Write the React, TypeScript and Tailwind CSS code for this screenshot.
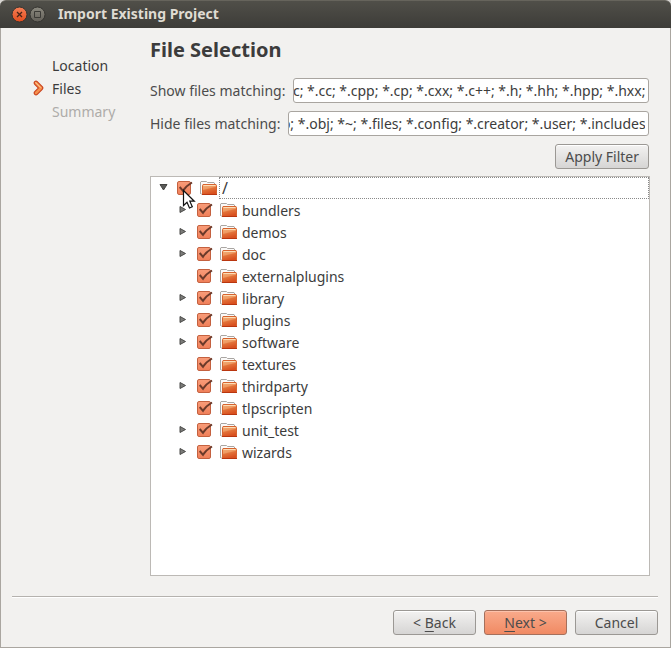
import { useId, useLayoutEffect, useRef, useState } from "react";
import type { ReactNode } from "react";

type Entry = { name: string; expandable: boolean };

const entries: Entry[] = [
  { name: "bundlers", expandable: true },
  { name: "demos", expandable: true },
  { name: "doc", expandable: true },
  { name: "externalplugins", expandable: false },
  { name: "library", expandable: true },
  { name: "plugins", expandable: true },
  { name: "software", expandable: true },
  { name: "textures", expandable: false },
  { name: "thirdparty", expandable: true },
  { name: "tlpscripten", expandable: false },
  { name: "unit_test", expandable: true },
  { name: "wizards", expandable: true },
];

function FolderIcon() {
  return (
    <svg width="17" height="16" viewBox="0 0 17 16" className="shrink-0" aria-hidden="true">
      <defs>
        <linearGradient id="folderFace" x1="0" y1="0" x2="0.35" y2="1">
          <stop offset="0" stopColor="#f3ae76" />
          <stop offset="0.45" stopColor="#ee9a62" />
          <stop offset="0.55" stopColor="#e2733a" />
          <stop offset="1" stopColor="#d9501f" />
        </linearGradient>
      </defs>
      <path d="M.5 14V2l.5-.5h5.500l1 1H14l.5.5v2" fill="#fbfaf9" stroke="#aaa6a3" />
      <path d="M.5 13.500 2.500 14.500" stroke="#b9b5b2" />
      <path d="M2.500 14.500V5.500l.5-1h13l.5 1v9z" fill="url(#folderFace)" stroke="#d7642f" />
      <path d="M3.500 5.500H15.500" stroke="#fbdcb6" />
      <path d="M2 14.500h15" stroke="#b9360f" />
    </svg>
  );
}

function TreeCheckbox({ id }: { id: string }) {
  return (
    <span className="relative size-4 shrink-0">
      <input
        id={id}
        type="checkbox"
        defaultChecked
        className="peer mt-px block size-[14px] appearance-none rounded-xs border border-[#c4613f] bg-white checked:bg-linear-to-b checked:from-[#f89b78] checked:to-[#f0805a]"
      />
      <svg
        viewBox="0 0 17 16"
        width="17"
        height="16"
        className="pointer-events-none absolute top-0 left-0 hidden peer-checked:block"
        aria-hidden="true"
      >
        <path d="M2.700 7 6 10.800Q9 6 15 2.500" fill="none" stroke="#6b3a2a" strokeWidth="2" />
      </svg>
    </span>
  );
}

function Expander({ open, label }: { open: boolean; label: string }) {
  return (
    <button type="button" aria-label={label} aria-expanded={open} className="flex size-4 shrink-0 items-center justify-center">
      <svg width="10" height="10" viewBox="0 0 10 10" aria-hidden="true">
        {open ? (
          <path d="M2 1.500h7L5.500 7z" fill="#5a5a58" stroke="#434341" />
        ) : (
          <path d="M2 1.500v6L7.500 4.500z" fill="#7b7b79" stroke="#4b4b49" />
        )}
      </svg>
    </button>
  );
}

function PointerCursor() {
  return (
    <svg width="14" height="21" viewBox="0 0 14 21" className="pointer-events-none absolute top-[12px] left-[31px] z-10" aria-hidden="true">
      <path d="M1.500 1.500v15l3.500-3.300 2.500 5.800 2.800-1.200-2.500-5.600h4.500z" fill="#fff" stroke="#111" strokeWidth="1.200" />
    </svg>
  );
}

function FilterField({ label, initial }: { label: string; initial: string }) {
  const id = useId();
  const ref = useRef<HTMLInputElement>(null);
  const [value, setValue] = useState(initial);
  // Keep the end of a long pattern list in view.
  useLayoutEffect(() => {
    if (ref.current) ref.current.scrollLeft = ref.current.scrollWidth;
  }, []);
  return (
    <div className="flex items-center gap-2">
      <label htmlFor={id} className="shrink-0 text-[#4c4c4c]">
        {label}
      </label>
      <input
        id={id}
        ref={ref}
        value={value}
        onChange={(e) => setValue(e.target.value)}
        className="h-[25px] min-w-0 flex-1 rounded-[3px] border border-[#a9a5a0] bg-white pr-[3px] text-right text-[#3c3c3c] outline-none"
      />
    </div>
  );
}

function PushButton({ children, primary = false, wide = true }: { children: ReactNode; primary?: boolean; wide?: boolean }) {
  const tone = primary
    ? "border-[#a5705c] from-[#f9aa8b] to-[#f08a63] shadow-[inset_0_1px_0_#fcc2ab]"
    : "border-[#9b9894] from-[#f3f2f1] to-[#d6d5d4] shadow-[inset_0_1px_0_#ffffff]";
  const width = wide ? "w-[83px]" : "px-[9px]";
  return (
    <button
      type="button"
      className={`flex h-[25px] items-center justify-center rounded-[3px] border bg-linear-to-b whitespace-pre text-[#4c4c4c] ${tone} ${width}`}
    >
      {children}
    </button>
  );
}

function TitleBar() {
  return (
    <header className="flex h-7 items-center rounded-t-md border-t border-[#66645c] bg-linear-to-b from-[#504f49] to-[#3d3c38] pl-[11px]">
      <button type="button" aria-label="Close" className="mr-px">
        <svg width="17" height="17" viewBox="0 0 17 17" aria-hidden="true">
          <defs>
            <linearGradient id="closeFace" x1="0" y1="0" x2="0" y2="1">
              <stop offset="0" stopColor="#f58057" />
              <stop offset="1" stopColor="#e44c1d" />
            </linearGradient>
          </defs>
          <circle cx="8.500" cy="8.500" r="7.500" fill="url(#closeFace)" stroke="#34332f" />
          <path d="m6 6 5 5m0-5-5 5" stroke="#4a2418" strokeWidth="1.300" />
        </svg>
      </button>
      <button type="button" aria-label="Maximize">
        <svg width="17" height="17" viewBox="0 0 17 17" aria-hidden="true">
          <defs>
            <linearGradient id="maxFace" x1="0" y1="0" x2="0" y2="1">
              <stop offset="0" stopColor="#8b897f" />
              <stop offset="1" stopColor="#625f58" />
            </linearGradient>
          </defs>
          <circle cx="8.500" cy="8.500" r="7.500" fill="url(#maxFace)" stroke="#34332f" />
          <path d="M5.500 5.500h6v6h-6z" fill="none" stroke="#3b3a36" />
        </svg>
      </button>
      <h1 className="ml-3 pb-0.5 text-sm font-bold text-[#dfdbd2]">Import Existing Project</h1>
    </header>
  );
}

export default function App() {
  return (
    <div className="flex min-h-screen flex-col bg-[#d8d6d3] font-['Noto_Sans','Open_Sans',sans-serif] text-sm text-[#3c3c3c]">
      <TitleBar />
      <div className="flex flex-1 flex-col border border-t-0 border-[#aaa6a0] bg-[#f2f1ef] pr-3 pb-3 pl-[11px]">
        <div className="flex flex-1">
          <nav aria-label="Steps" className="w-[138px] shrink-0 pt-[26px] pl-5">
            <ol className="leading-[23px]">
              <li className="pl-5">Location</li>
              <li aria-current="step" className="flex items-center">
                <svg width="12" height="17" viewBox="0 0 12 17" className="mr-2" aria-hidden="true">
                  <path d="M4 3 9 8 4 13" fill="none" stroke="#c8401b" strokeWidth="4.600" strokeLinecap="round" strokeLinejoin="round" />
                  <path d="M4 3 9 8 4 13" fill="none" stroke="#f58f4c" strokeWidth="2.600" strokeLinecap="round" strokeLinejoin="round" />
                  <path d="M3.800 2.600 8.600 7.400" fill="none" stroke="#fcd09a" strokeLinecap="round" />
                </svg>
                Files
              </li>
              <li className="pl-5 text-[#aeaca9]">Summary</li>
            </ol>
          </nav>
          <main className="flex min-w-0 flex-1 flex-col pr-2">
            <h2 className="mt-[9px] mb-[15px] text-xl leading-[26px] font-bold">File Selection</h2>
            <div className="flex flex-col gap-2 pr-px">
              <FilterField label="Show files matching:" initial="*.c; *.cc; *.cpp; *.cp; *.cxx; *.c++; *.h; *.hh; *.hpp; *.hxx;" />
              <FilterField label="Hide files matching:" initial="*.o; *.obj; *~; *.files; *.config; *.creator; *.user; *.includes" />
              <div className="flex justify-end">
                <PushButton wide={false}>Apply Filter</PushButton>
              </div>
            </div>
            <div className="relative mt-[7px] flex-1 border border-[#bcb9b5] bg-white">
              <PointerCursor />
              <ul className="leading-[22px]">
                <li>
                  <div className="flex h-[22px] items-center pl-1">
                    <Expander open label="Collapse /" />
                    <span className="ml-[6px] flex">
                      <TreeCheckbox id="entry-root" />
                    </span>
                    <span className="ml-[7px]">
                      <FolderIcon />
                    </span>
                    <label htmlFor="entry-root" className="ml-[2px] h-[22px] flex-1 border border-dotted border-[#8a8a8a] pl-[2px] text-base leading-[20px]">
                      /
                    </label>
                  </div>
                  <ul>
                    {entries.map((entry) => (
                      <li key={entry.name} className="flex h-[22px] items-center pl-6">
                        {entry.expandable ? <Expander open={false} label={`Expand ${entry.name}`} /> : <span className="size-4" />}
                        <span className="ml-[6px] flex">
                          <TreeCheckbox id={`entry-${entry.name}`} />
                        </span>
                        <span className="ml-[7px]">
                          <FolderIcon />
                        </span>
                        <label htmlFor={`entry-${entry.name}`} className="ml-[5px] pt-0.5">
                          {entry.name}
                        </label>
                      </li>
                    ))}
                  </ul>
                </li>
              </ul>
            </div>
          </main>
        </div>
        <footer className="mt-5 flex justify-end gap-2 border-t border-[#b5b2ae] pt-[13px] shadow-[inset_0_1px_0_#ffffff]">
          <PushButton>
            {"< "}
            <span className="underline underline-offset-3">B</span>ack
          </PushButton>
          <PushButton primary>
            <span className="underline underline-offset-3">N</span>
            {"ext >"}
          </PushButton>
          <PushButton>Cancel</PushButton>
        </footer>
      </div>
    </div>
  );
}
